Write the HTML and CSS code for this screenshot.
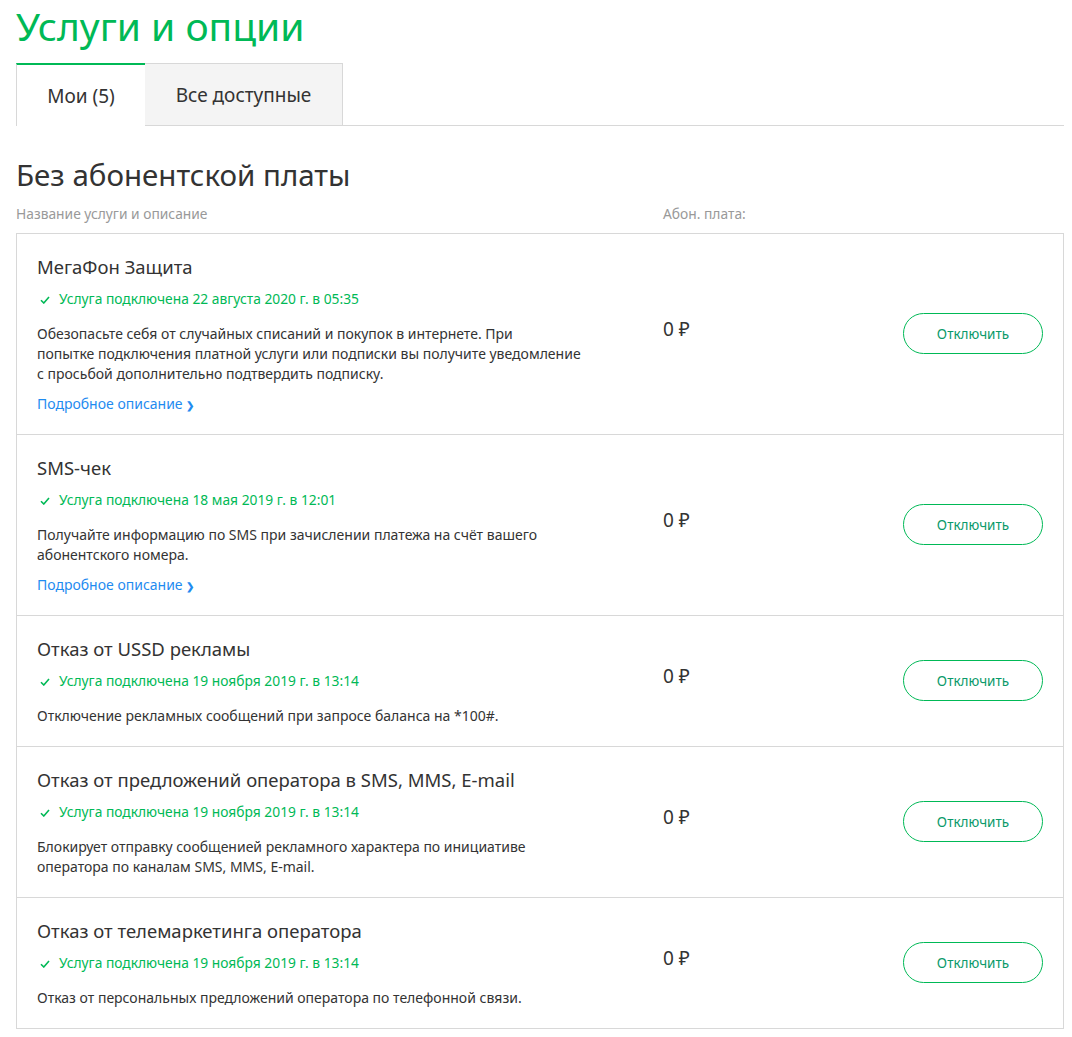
FILE: index.html
```html
<!DOCTYPE html>
<html lang="ru">
<head>
<meta charset="utf-8">
<title>Услуги и опции</title>
<link rel="stylesheet" href="styles.css">
</head>
<body>
<div class="page">
  <h1 class="title">Услуги и опции</h1>
  <div class="tabs">
    <div class="tab tab-active">Мои (5)</div>
    <div class="tab">Все доступные</div>
  </div>
  <h2 class="section">Без абонентской платы</h2>
  <div class="thead">
    <div class="th-name">Название услуги и описание</div>
    <div class="th-price">Абон. плата:</div>
  </div>
  <div class="list">
    <div class="row">
      <div class="info">
        <div class="name">МегаФон Защита</div>
        <div class="status"><svg class="check" viewBox="0 0 10 8" width="10" height="8"><polyline points="1,4.2 3.8,7 9,1" /></svg>Услуга подключена 22 августа 2020 г. в 05:35</div>
        <div class="desc">Обезопасьте себя от случайных списаний и покупок в интернете. При<br>попытке подключения платной услуги или подписки вы получите уведомление с просьбой дополнительно подтвердить подписку.</div>
        <a class="more" href="#">Подробное описание <span class="chev">❯</span></a>
      </div>
      <div class="price">0 ₽</div>
      <button class="btn">Отключить</button>
    </div>
    <div class="row">
      <div class="info">
        <div class="name">SMS-чек</div>
        <div class="status"><svg class="check" viewBox="0 0 10 8" width="10" height="8"><polyline points="1,4.2 3.8,7 9,1" /></svg>Услуга подключена 18 мая 2019 г. в 12:01</div>
        <div class="desc">Получайте информацию по SMS при зачислении платежа на счёт вашего абонентского номера.</div>
        <a class="more" href="#">Подробное описание <span class="chev">❯</span></a>
      </div>
      <div class="price">0 ₽</div>
      <button class="btn">Отключить</button>
    </div>
    <div class="row">
      <div class="info">
        <div class="name">Отказ от USSD рекламы</div>
        <div class="status"><svg class="check" viewBox="0 0 10 8" width="10" height="8"><polyline points="1,4.2 3.8,7 9,1" /></svg>Услуга подключена 19 ноября 2019 г. в 13:14</div>
        <div class="desc">Отключение рекламных сообщений при запросе баланса на *100#.</div>
      </div>
      <div class="price">0 ₽</div>
      <button class="btn">Отключить</button>
    </div>
    <div class="row">
      <div class="info">
        <div class="name">Отказ от предложений оператора в SMS, MMS, E-mail</div>
        <div class="status"><svg class="check" viewBox="0 0 10 8" width="10" height="8"><polyline points="1,4.2 3.8,7 9,1" /></svg>Услуга подключена 19 ноября 2019 г. в 13:14</div>
        <div class="desc">Блокирует отправку сообщенией рекламного характера по инициативе оператора по каналам SMS, MMS, E-mail.</div>
      </div>
      <div class="price">0 ₽</div>
      <button class="btn">Отключить</button>
    </div>
    <div class="row">
      <div class="info">
        <div class="name">Отказ от телемаркетинга оператора</div>
        <div class="status"><svg class="check" viewBox="0 0 10 8" width="10" height="8"><polyline points="1,4.2 3.8,7 9,1" /></svg>Услуга подключена 19 ноября 2019 г. в 13:14</div>
        <div class="desc">Отказ от персональных предложений оператора по телефонной связи.</div>
      </div>
      <div class="price">0 ₽</div>
      <button class="btn">Отключить</button>
    </div>
  </div>
</div>
</body>
</html>
```
FILE: styles.css
```css
* { box-sizing: border-box; }
body {
  margin: 0;
  background: #fff;
  font-family: "Noto Sans", "Liberation Sans", Arial, sans-serif;
  color: #333;
}
.page {
  padding: 0 8px 0 16px;
}
.title {
  margin: 0;
  padding-top: 2px;
  font-size: 39px;
  line-height: 48px;
  font-weight: 400;
  color: #00b956;
}
.tabs {
  display: flex;
  margin-top: 13px;
  border-bottom: 1px solid #d8d8d8;
}
.tab {
  height: 62px;
  display: flex;
  align-items: center;
  justify-content: center;
  font-size: 19px;
  color: #333;
  background: #f4f4f4;
  border: 1px solid #d8d8d8;
  border-bottom: none;
  border-left: none;
  width: 198px;
  margin-bottom: -1px;
}
.tab-active {
  background: #fff;
  width: 129px;
  border-top: 2px solid #00b956;
  border-right: none;
  border-left: 1px solid #d8d8d8;
  height: 63px;
}
.section {
  margin: 31px 0 0;
  font-size: 29.5px;
  line-height: 36px;
  font-weight: 400;
  color: #333;
}
.thead {
  display: grid;
  grid-template-columns: 647px 1fr;
  margin-top: 11px;
  font-size: 13.8px;
  line-height: 20px;
  color: #999;
  padding-bottom: 9px;
}
.list {
  border: 1px solid #d8d8d8;
}
.row {
  display: grid;
  grid-template-columns: 626px 1fr 140px;
  align-items: center;
  padding: 22px 20px 20px 20px;
  border-top: 1px solid #d8d8d8;
}
.row:first-child { border-top: none; }
.info {
  line-height: 20px;
  font-size: 14px;
}
.name {
  font-size: 18.5px;
  line-height: 22px;
  color: #333;
}
.status {
  display: flex;
  align-items: center;
  margin-top: 11px;
  font-size: 13.8px;
  line-height: 20px;
  height: 20px;
  color: #00b956;
}
.check {
  flex: none;
  margin: 1px 9px 0 3px;
  fill: none;
  stroke: #00b956;
  stroke-width: 1.6;
}
.desc {
  margin-top: 15px;
  max-width: 548px;
  font-size: 14px;
  line-height: 20px;
  color: #333;
}
.more {
  display: block;
  width: max-content;
  margin-top: 10px;
  font-size: 14px;
  line-height: 20px;
  color: #1f8bf0;
  text-decoration: none;
}
.chev {
  font-size: 10px;
  font-weight: 700;
  line-height: 1;
}
.price {
  font-size: 19px;
  line-height: 22px;
  color: #333;
  margin-bottom: 12px;
}
.btn {
  width: 140px;
  height: 41px;
  margin-bottom: 3px;
  border: 1px solid #00b956;
  border-radius: 21px;
  background: #fff;
  font-family: inherit;
  font-size: 13.5px;
  color: #0a9a6a;
  cursor: pointer;
}
```
